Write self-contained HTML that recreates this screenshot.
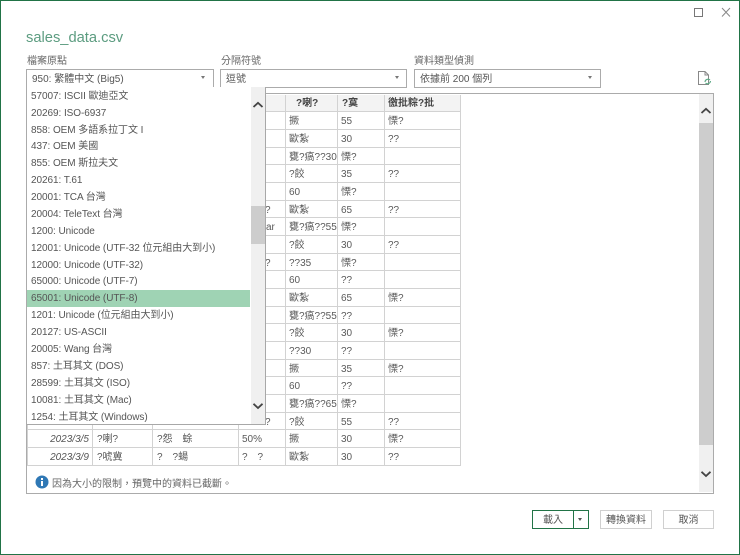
<!DOCTYPE html>
<html lang="zh-Hant"><head><meta charset="utf-8"><title>sales_data.csv</title>
<style>
html,body{margin:0;padding:0;background:#fff}
body{width:740px;height:555px;position:relative;overflow:hidden;font-family:"Liberation Sans","Noto Sans CJK TC",sans-serif;font-size:10px;color:#444}
#w{position:absolute;left:0;top:0;width:740px;height:555px;filter:blur(.3px)}
.a{position:absolute;white-space:nowrap}
.frame{position:absolute;left:0;top:0;width:738px;height:553px;border:1px solid #217346}
.lbl{font-size:10px;color:#666;line-height:14px}
.sel{position:absolute;top:69px;height:17px;border:1px solid #ababab;background:#fff;line-height:19px;color:#555;padding-left:5px;box-sizing:content-box}
.car{position:absolute;width:0;height:0;border-left:2.5px solid transparent;border-right:2.5px solid transparent;border-top:3px solid #777;top:76px}
.box{position:absolute;left:26px;top:93px;width:686px;height:399px;border:1px solid #ababab;background:#fff}
.r{position:absolute;left:27px;width:434px;height:17.7px;border-bottom:1px solid #d2d2d2;box-sizing:border-box;line-height:19px;color:#5a5a5a}
.r span{position:absolute;top:0;white-space:nowrap}
.c1{right:372px;font-style:italic;color:#555}.c2{left:70px}.c3{left:130px}.c4{left:215px}.c5{left:262px}.c6{left:314px}.c7{left:361px}
.h{background:#f3f3f3;font-weight:bold;color:#444;line-height:18px}
.v{position:absolute;top:95px;width:1px;height:371px;background:#d2d2d2}
.dd{position:absolute;left:26px;top:87px;width:238px;height:337px;background:#fff;border-left:1px solid #ababab;border-right:1px solid #a8a8a8;border-bottom:1px solid #a8a8a8;box-sizing:content-box;overflow:hidden}
.it{position:absolute;left:4px;height:17px;line-height:17px;white-space:nowrap;color:#555;font-size:10px;letter-spacing:-.06px}
.sb{position:absolute;background:#f0f0f0}
.th{position:absolute;background:#cdcdcd}
.btn{position:absolute;top:510px;height:17px;line-height:19px;text-align:center;border:1px solid #d0d0d0;background:#fff;color:#555;font-size:10px}
</style></head><body><div id="w">
<div class="frame"></div>
<svg class="a" style="left:692px;top:5px" width="44" height="16" viewBox="0 0 44 16"><rect x="2.5" y="3.5" width="8" height="8" fill="none" stroke="#777"/><path d="M30 3L38 11.5M38 3L30 11.5" stroke="#888" fill="none"/></svg>
<div class="a" style="left:26px;top:26.5px;font-size:14.7px;line-height:22px;color:#5c9c80">sales_data.csv</div>
<div class="a lbl" style="left:27px;top:55px">檔案原點</div>
<div class="a lbl" style="left:221px;top:55px">分隔符號</div>
<div class="a lbl" style="left:414px;top:55px">資料類型偵測</div>
<div class="sel" style="left:26px;width:181px">950: 繁體中文 (Big5)</div><div class="car" style="left:201px"></div>
<div class="sel" style="left:220px;width:180px">逗號</div><div class="car" style="left:395px"></div>
<div class="sel" style="left:414px;width:180px">依據前 200 個列</div><div class="car" style="left:588px"></div>
<svg class="a" style="left:696px;top:70px" width="18" height="17" viewBox="0 0 18 17"><path d="M2.5 1.5H9L12.5 5V14.5H2.5Z M9 1.5V5H12.5" fill="#fff" stroke="#888"/><path d="M9 12a3 3 0 0 1 5-2M14.5 11a3 3 0 0 1-5 2" fill="none" stroke="#5aa883" stroke-width="1.1"/></svg>

<div class="box"></div>
<div class="sb" style="left:699px;top:94px;width:14px;height:398px"></div>
<div class="th" style="left:699px;top:123px;width:14px;height:322px"></div>
<svg class="a" style="left:699px;top:106px" width="14" height="10"><path d="M2.5 7L7 2.8L11.5 7" fill="none" stroke="#444" stroke-width="1.8"/></svg>
<svg class="a" style="left:699px;top:469px" width="14" height="10"><path d="M2.5 2.8L7 7L11.5 2.8" fill="none" stroke="#444" stroke-width="1.8"/></svg>

<div class="r h" style="top:94.5px"><span style="left:269px">?喇?</span><span class="c6" style="left:315px">?寞</span><span class="c7">徼批粽?批</span></div>
<div class="r" style="top:112.2px"><span class="c5">撅</span><span class="c6">55</span><span class="c7">慄?</span></div>
<div class="r" style="top:129.9px"><span class="c5">歐紮</span><span class="c6">30</span><span class="c7">??</span></div>
<div class="r" style="top:147.5px"><span class="c5">甕?瘑??30</span><span class="c6">慄?</span></div>
<div class="r" style="top:165.2px"><span class="c5">?餃</span><span class="c6">35</span><span class="c7">??</span></div>
<div class="r" style="top:182.9px"><span class="c5">60</span><span class="c6">慄?</span></div>
<div class="r" style="top:200.5px"><span style="left:238px">?</span><span class="c5">歐紮</span><span class="c6">65</span><span class="c7">??</span></div>
<div class="r" style="top:218.2px"><span style="left:239px">ar</span><span class="c5">甕?瘑??55</span><span class="c6">慄?</span></div>
<div class="r" style="top:235.9px"><span class="c5">?餃</span><span class="c6">30</span><span class="c7">??</span></div>
<div class="r" style="top:253.5px"><span style="left:238px">?</span><span class="c5">??35</span><span class="c6">慄?</span></div>
<div class="r" style="top:271.2px"><span class="c5">60</span><span class="c6">??</span></div>
<div class="r" style="top:288.9px"><span class="c5">歐紮</span><span class="c6">65</span><span class="c7">慄?</span></div>
<div class="r" style="top:306.5px"><span class="c5">甕?瘑??55</span><span class="c6">??</span></div>
<div class="r" style="top:324.2px"><span class="c5">?餃</span><span class="c6">30</span><span class="c7">慄?</span></div>
<div class="r" style="top:341.9px"><span class="c5">??30</span><span class="c6">??</span></div>
<div class="r" style="top:359.5px"><span class="c5">撅</span><span class="c6">35</span><span class="c7">慄?</span></div>
<div class="r" style="top:377.2px"><span class="c5">60</span><span class="c6">??</span></div>
<div class="r" style="top:394.9px"><span class="c5">甕?瘑??65</span><span class="c6">慄?</span></div>
<div class="r" style="top:412.5px"><span style="left:238px">?</span><span class="c5">?餃</span><span class="c6">55</span><span class="c7">??</span></div>
<div class="r" style="top:430.2px"><span class="c1">2023/3/5</span><span class="c2">?喇?</span><span class="c3">?怨　蜍</span><span class="c4">50%</span><span class="c5">撅</span><span class="c6">30</span><span class="c7">慄?</span></div>
<div class="r" style="top:447.9px"><span class="c1">2023/3/9</span><span class="c2">?唬冀</span><span class="c3">?　?蝪</span><span class="c4">?　?</span><span class="c5">歐紮</span><span class="c6">30</span><span class="c7">??</span></div>
<div class="v" style="left:27px"></div><div class="v" style="left:92px"></div><div class="v" style="left:152px"></div><div class="v" style="left:238px"></div><div class="v" style="left:285px"></div><div class="v" style="left:337px"></div><div class="v" style="left:384px"></div><div class="v" style="left:460px"></div>

<svg class="a" style="left:35px;top:475px" width="14" height="14" viewBox="0 0 14 14"><circle cx="7" cy="7" r="6.5" fill="#2f78b5"/><rect x="6" y="6" width="2" height="5" fill="#fff"/><rect x="6" y="3" width="2" height="2" fill="#fff"/></svg>
<div class="a" style="left:52px;top:477.5px;line-height:14px;color:#666">因為大小的限制，預覽中的資料已截斷。</div>

<div class="dd">
<div class="it" style="top:0.5px">57007: ISCII 歐迪亞文</div>
<div class="it" style="top:17.5px">20269: ISO-6937</div>
<div class="it" style="top:34.5px">858: OEM 多語系拉丁文 I</div>
<div class="it" style="top:51px">437: OEM 美國</div>
<div class="it" style="top:68px">855: OEM 斯拉夫文</div>
<div class="it" style="top:85px">20261: T.61</div>
<div class="it" style="top:102px">20001: TCA 台灣</div>
<div class="it" style="top:119px">20004: TeleText 台灣</div>
<div class="it" style="top:135.5px">1200: Unicode</div>
<div class="it" style="top:152.5px">12001: Unicode (UTF-32 位元組由大到小)</div>
<div class="it" style="top:169.5px">12000: Unicode (UTF-32)</div>
<div class="it" style="top:186px">65000: Unicode (UTF-7)</div>
<div class="a" style="left:0;top:202.5px;width:223px;height:17px;background:#9fd3b4"></div>
<div class="it" style="top:203px">65001: Unicode (UTF-8)</div>
<div class="it" style="top:220px">1201: Unicode (位元組由大到小)</div>
<div class="it" style="top:237px">20127: US-ASCII</div>
<div class="it" style="top:254px">20005: Wang 台灣</div>
<div class="it" style="top:270.5px">857: 土耳其文 (DOS)</div>
<div class="it" style="top:287.5px">28599: 土耳其文 (ISO)</div>
<div class="it" style="top:304.5px">10081: 土耳其文 (Mac)</div>
<div class="it" style="top:321.5px">1254: 土耳其文 (Windows)</div>
<div class="sb" style="left:224px;top:0;width:14px;height:338px"></div>
<div class="th" style="left:224px;top:119px;width:14px;height:38px"></div>
<svg class="a" style="left:224px;top:13px" width="14" height="10"><path d="M2.5 7L7 2.8L11.5 7" fill="none" stroke="#444" stroke-width="1.8"/></svg>
<svg class="a" style="left:224px;top:314px" width="14" height="10"><path d="M2.5 2.8L7 7L11.5 2.8" fill="none" stroke="#444" stroke-width="1.8"/></svg>
</div>

<div class="btn" style="left:532px;width:40px;border-color:#217346">載入</div>
<div class="btn" style="left:573px;width:14px;border-color:#217346"></div>
<div class="a" style="left:578px;top:518px;width:0;height:0;border-left:2.5px solid transparent;border-right:2.5px solid transparent;border-top:3px solid #555"></div>
<div class="btn" style="left:600px;width:50px">轉換資料</div>
<div class="btn" style="left:663px;width:49px">取消</div>
</div></body></html>
